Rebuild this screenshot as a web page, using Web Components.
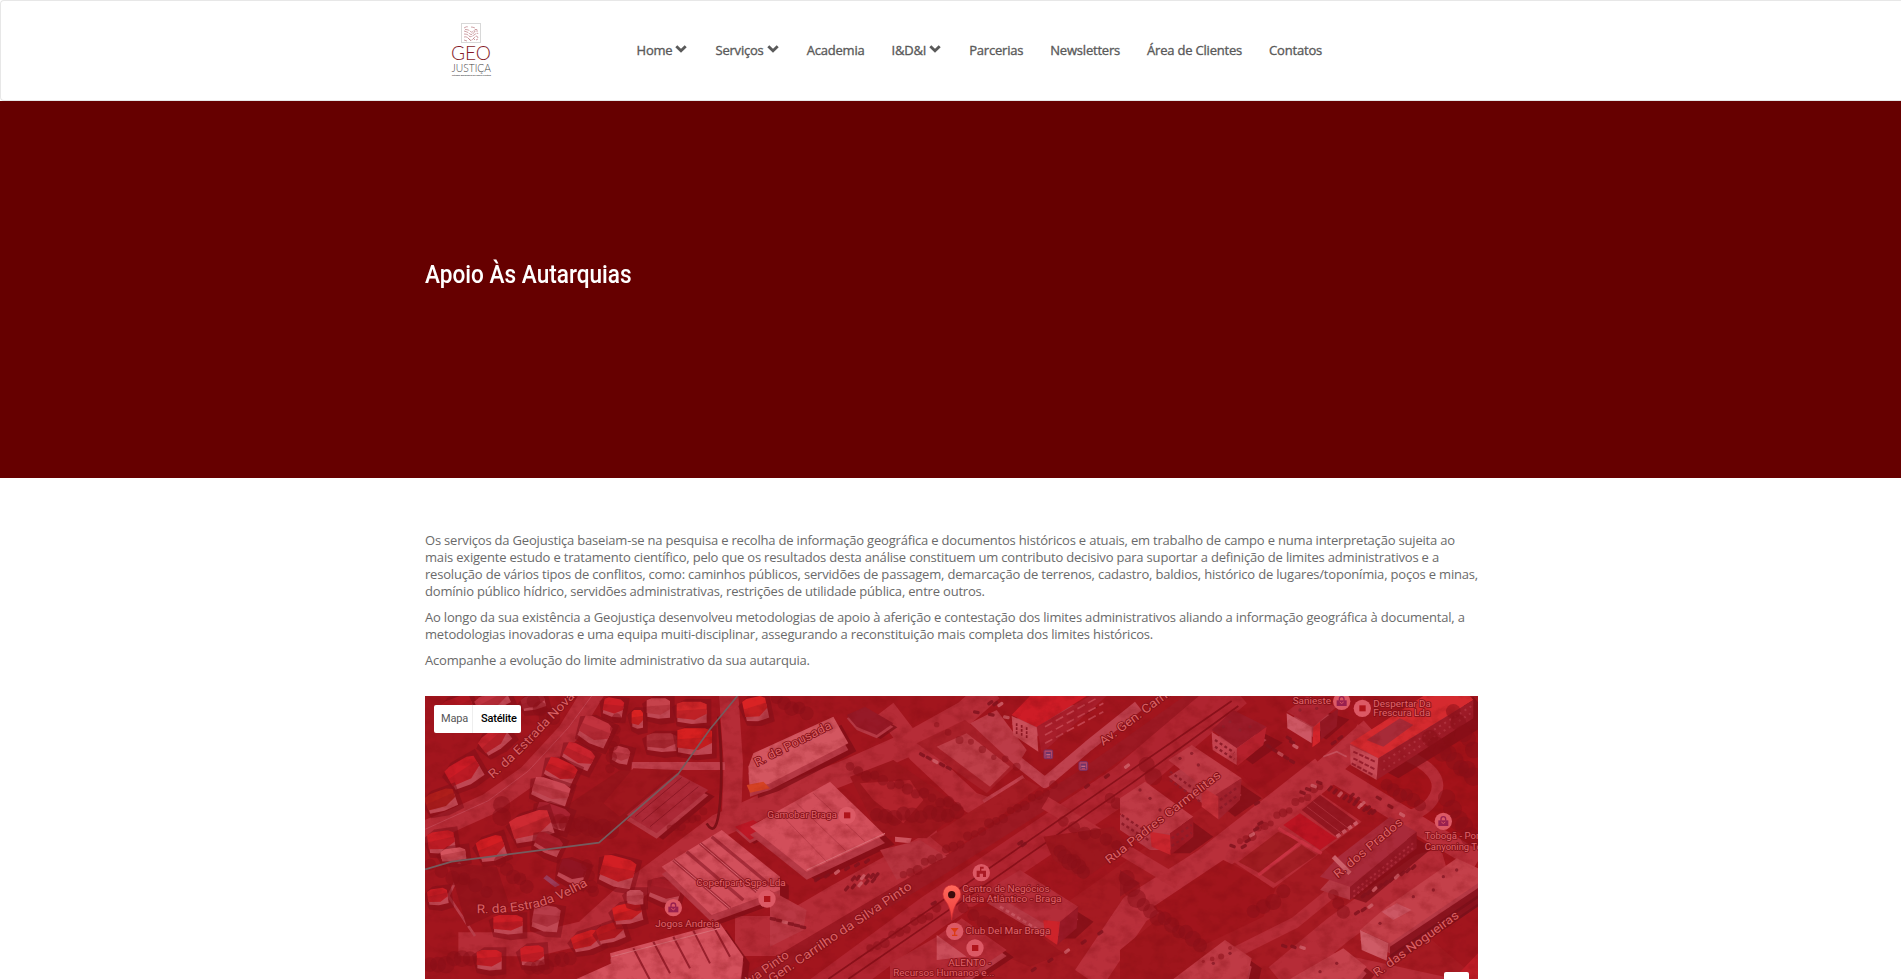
<!DOCTYPE html>
<html lang="pt">
<head>
<meta charset="utf-8">
<title>Geojustiça - Apoio Às Autarquias</title>
<style>
html,body{margin:0;height:100%;overflow:hidden;background:#fff;font-family:"Open Sans",sans-serif}
</style>
</head>
<body>
<geo-page>
  <geo-header slot="header">
    <geo-logo slot="logo"></geo-logo>
    <geo-nav-item menu>Home</geo-nav-item>
    <geo-nav-item menu>Serviços</geo-nav-item>
    <geo-nav-item>Academia</geo-nav-item>
    <geo-nav-item menu>I&amp;D&amp;I</geo-nav-item>
    <geo-nav-item>Parcerias</geo-nav-item>
    <geo-nav-item>Newsletters</geo-nav-item>
    <geo-nav-item>Área de Clientes</geo-nav-item>
    <geo-nav-item>Contatos</geo-nav-item>
  </geo-header>
  <geo-banner slot="banner">Apoio Às Autarquias</geo-banner>
  <geo-text>Os serviços da Geojustiça baseiam-se na pesquisa e recolha de informação geográfica e documentos históricos e atuais, em trabalho de campo e numa interpretação sujeita ao<br>mais exigente estudo e tratamento científico, pelo que os resultados desta análise constituem um contributo decisivo para suportar a definição de limites administrativos e a<br>resolução de vários tipos de conflitos, como: caminhos públicos, servidões de passagem, demarcação de terrenos, cadastro, baldios, histórico de lugares/toponímia, poços e minas,<br>domínio público hídrico, servidões administrativas, restrições de utilidade pública, entre outros.</geo-text>
  <geo-text>Ao longo da sua existência a Geojustiça desenvolveu metodologias de apoio à aferição e contestação dos limites administrativos aliando a informação geográfica à documental, a<br>metodologias inovadoras e uma equipa muiti-disciplinar, assegurando a reconstituição mais completa dos limites históricos.</geo-text>
  <geo-text>Acompanhe a evolução do limite administrativo da sua autarquia.</geo-text>
  <geo-map></geo-map>
</geo-page>
<script>
class Base extends HTMLElement{
  constructor(){super();this.attachShadow({mode:'open'}).innerHTML=this.view()}
}
customElements.define('geo-page',class extends Base{view(){return `
<style>:host{display:flex;flex-direction:column;height:979px;overflow:hidden}
main{width:1054px;margin:0 0 0 425px;padding-top:54px;display:flex;flex-direction:column;flex:1;min-height:0}</style>
<slot name="header"></slot><slot name="banner"></slot><main><slot></slot></main>`}});

customElements.define('geo-header',class extends Base{view(){return `
<style>:host{display:flex;box-sizing:border-box;height:101px;border:1px solid #e7e7e7;border-right:0;border-radius:4px 0 0 4px;background:#fff;padding-left:450px}
.logo{width:185.5px;padding-top:22px}
nav{display:flex;align-items:flex-start;padding-top:40px;gap:27px}</style>
<div class="logo"><slot name="logo"></slot></div><nav><slot></slot></nav>`}});

customElements.define('geo-nav-item',class extends Base{
view(){return `
<style>:host{display:flex;font:13px/18px "Open Sans",sans-serif;letter-spacing:-.2px;color:#5a5a5a;white-space:nowrap;-webkit-text-stroke:.35px #5a5a5a}
svg{display:none;width:12px;height:8px;margin:4px 1px 0 3px}:host([menu]) svg{display:block}</style>
<span><slot></slot></span><svg viewBox="0 0 12 8"><path d="M1.3 1.3 6 5.8l4.7-4.5" fill="none" stroke="#5a5a5a" stroke-width="2.9"/></svg>`}});

customElements.define('geo-logo',class extends Base{view(){return `
<style>:host{display:block}svg{display:block;overflow:visible}text{font-family:Lato,sans-serif;font-weight:300}</style>
<svg width="42" height="56" viewBox="0 0 42 56">
<rect x="10.5" y=".5" width="19" height="19" fill="#fff" stroke="#d8d8d8"/>
<g fill="none" stroke="#bd8188" stroke-width=".75">
<path d="M13 5q3-2 4-1M20 4q2 0 4 1M13 8q4 1 6 3t5-3h3M14 6.5q4 0 5.5 2T24 6.5h3M13 11q4 0 5 2t5-1 4-1M13 14q3-1 5 2t5-1 4 0M13 17l3 1M17 15l3 3M22 15l2 2M25 17l2-1" stroke-dasharray="4 .8"/></g>
<text x="0" y="37.3" textLength="40" lengthAdjust="spacingAndGlyphs" font-size="19.2" fill="#861b28">GEO</text>
<text x=".5" y="49.2" textLength="39.5" lengthAdjust="spacingAndGlyphs" font-size="12" fill="#444">JUSTIÇA</text>
<text x="1" y="52.8" textLength="39" lengthAdjust="spacingAndGlyphs" style="font-weight:700" font-size="2.4" fill="#444">estudos geográficos de apoio à justiça</text></svg>`}});

customElements.define('geo-banner',class extends Base{view(){return `
<style>:host{display:flex;align-items:center;box-sizing:border-box;height:377px;background:#600;padding:0 0 31px 425px}
h1{margin:0;font:500 26.5px/32px Roboto,sans-serif;color:#fff;white-space:nowrap;transform:scaleX(.853);transform-origin:0 50%}</style>
<h1><slot></slot></h1>`}});

customElements.define('geo-text',class extends Base{view(){return `
<style>:host{display:block;font:13px/17px "Open Sans",sans-serif;letter-spacing:-.19px;color:#6a6a6a;margin-bottom:9px;white-space:nowrap}</style><slot></slot>`}});

/* Building with a lit roof polygon, a shaded front wall and a cast shadow. */
const roof=(pts,fill='#c84a58',h=14)=>{
  const p=pts.split(' ').map(s=>s.split(',').map(Number));
  const sh=(dx,dy)=>p.map(a=>(a[0]+dx)+','+(a[1]+dy)).join(' ');
  return `<polygon points="${sh(h*1.2,h*1.2)}" fill="#68040c" opacity=".75"/><polygon points="${sh(0,h)}" fill="#b03d49"/><polygon points="${pts}" fill="${fill}"/>`};
const house=(x,y,w,h,r,fill='#cf1a20')=>`<g transform="translate(${x} ${y}) rotate(${r})"><path d="M-14 16 ${w*.3} -8H${w+14}V${h+18}L${w*.6} ${h+24} 0 ${h+14}z" fill="#6d060e" opacity=".55"/><path d="M2 ${h*.4}H${w}V${h*1.06}L${w*.5} ${h*1.12} 2 ${h}z" fill="#bd505b"/><path d="M0 6 ${w*.2} 0H${w*.8}L${w} 8V${h*.6}L${w*.6} ${h*.9} 0 ${h*.8}z" fill="${fill}"/><path d="M0 ${h*.45}L${w} ${h*.35}V${h*.6}L${w*.6} ${h*.9} 0 ${h*.8}z" fill="#7d0d16" opacity=".28"/></g>`;
const trees=(x1,y1,x2,y2,n,r=13)=>Array.from({length:n},(_,i)=>{const t=i/Math.max(1,n-1);return `<circle cx="${x1+(x2-x1)*t}" cy="${y1+(y2-y1)*t+(i%3-1)*6}" r="${r+(i*7%5)-2}" fill="#75060e" opacity=".5"/>`}).join('');
const cars=(x1,y1,x2,y2,n,r)=>Array.from({length:n},(_,i)=>{const t=i/Math.max(1,n-1);return `<rect transform="translate(${x1+(x2-x1)*t} ${y1+(y2-y1)*t}) rotate(${r})" width="20" height="10" rx="4" fill="${i%4==2?'#d07078':'#6b0a15'}" opacity=".85"/>`}).join('');
const disc=(x,y,g)=>`<circle cx="${x}" cy="${y}" r="26" fill="#dc5965"/><g transform="translate(${x} ${y})">${g}</g>`;
const square='<rect x="-9" y="-9" width="19" height="18" fill="#b0141b"/>';
const bag='<path d="M-15-3H15V14H-15z" fill="#99204f"/><path d="M-7-2v-5a7 7 0 0 1 14 0v5" fill="none" stroke="#99204f" stroke-width="4"/><path d="M-6 2q6 9 12 0" fill="none" stroke="#dc5965" stroke-width="3"/>';
const bus=(x,y)=>`<g transform="translate(${x} ${y})"><rect x="-13" y="-13" width="26" height="26" rx="4" fill="#b34665" stroke="#793064" stroke-width="3"/><path d="M-8-7H8V6H-8z" fill="#713469"/><path d="M-6-1H6V3H-6z" fill="#c6677c"/><path d="M-7 6v4M7 6v4" stroke="#713469" stroke-width="4"/></g>`;
const label=(x,y,t,len,s=27,r=0,a='')=>`<text transform="translate(${x} ${y}) rotate(${r})" font-size="${s}" textLength="${len}" lengthAdjust="spacingAndGlyphs" ${a}>${t}</text>`;

customElements.define('geo-map',class extends Base{view(){return `
<style>
:host{display:block;position:relative;width:1053px;height:283px;flex:none;margin-top:18px;background:#970f19;overflow:hidden}
svg.sat{display:block;width:1053px;height:283px}
.lbl text{font-family:Roboto,sans-serif;fill:#e0666c;stroke:#840f17;stroke-width:5;paint-order:stroke;stroke-linejoin:round}
.lbl .st text{fill:#db6165;stroke-width:5}
.types{position:absolute;left:9px;top:9px;display:flex;height:28px;background:#fff;border-radius:2px;font:11px/28px Roboto,sans-serif;letter-spacing:-.2px;width:87px}
.types span{box-sizing:border-box;width:39px;padding-left:7px;color:#565656;border-right:1px solid #eee}
.types b{width:48px;padding-left:8px;box-sizing:border-box;font-weight:500;color:#000}
.ctl{position:absolute;right:9px;bottom:0;width:25px;height:7px;background:#fff;border-radius:2px 2px 0 0}
</style>
<svg class="sat" viewBox="0 0 3159 849" preserveAspectRatio="none">
<defs>
<filter id="grain" x="0" y="0" width="100%" height="100%" color-interpolation-filters="sRGB"><feTurbulence type="fractalNoise" baseFrequency=".022 .028" numOctaves="5" seed="8"/><feColorMatrix values="0 0 0 0 .42  0 0 0 0 0  0 0 0 0 .02  2.4 0 0 0 -1.05"/></filter>
<filter id="soft" x="-5%" y="-5%" width="110%" height="110%" color-interpolation-filters="sRGB"><feGaussianBlur stdDeviation="2"/></filter>
<linearGradient id="pin" x2="0" y2="1"><stop stop-color="#ff6a5c"/><stop offset="1" stop-color="#ee3a3a"/></linearGradient>
</defs>
<rect width="3159" height="849" fill="#960e15"/>
<g filter="url(#soft)">
<path d="M1600 849 2450 250 3159 849z" fill="#9c151b"/><path d="M2800 100H3159V520L2850 330z" fill="#980a0f"/>
<!-- streets -->
<g fill="none" stroke="#b02c36" stroke-linejoin="round">
<path d="M-10 412 90 370 190 325 310 240 430 110 510-20" stroke-width="66"/>
<path d="M100 745 330 745 480 710 600 600 760 480 880 390 1080 300 1270 225 1450 145 1620 50 1700-20" stroke-width="72"/>
<path d="M910-20 925 200 920 350" stroke-width="58"/><path d="M620 210H900" stroke-width="24" stroke="#bb4450"/>
<path d="M930 720H1080L1250 620 1560 450" stroke-width="120"/>
<path d="M1380 40 1480 170 1640 320 1700 340" stroke-width="64"/>
<path d="M880 910 1540 520 1980 240 2360-30" stroke-width="46" stroke="#8e131c"/>
<path d="M1180 900 1520 650 2100 260 2430-20" stroke-width="110" stroke="#a9222d"/>
<path d="M1990 849 2130 640 2350 500 2700 225" stroke-width="96" stroke="#b4303b"/>
<path d="M2080 690 2700 225 2840 100" stroke-width="72" stroke="#b4303b"/>
<path d="M2690 210 3000 400 3159 495" stroke-width="58" stroke="#b4303b"/>
<path d="M2430 770 2610 680 2720 590" stroke-width="34"/>
<path d="M2560 849 2740 700 2990 520 3060 500" stroke-width="92"/>
<path d="M2700 800 3159 900" stroke-width="70"/>
<path d="M2790 100 2970 190Q3060 240 3030 300T2900 370" stroke-width="34"/>
<path d="M1860 320 2260 560" stroke-width="40"/><path d="M100 500 230 640M110 520 70 600 150 720" stroke="#b34450" stroke-width="8"/>
<path d="M1770 190 1860 260 1990 150 2140 30" stroke="#bd4855" stroke-width="32"/>
<path d="M1680 325 1800 250" stroke="#bf4754" stroke-width="30"/>
</g>
<path d="M1210 849 1540 622 2100 235 2420 15M1270 849 1560 650 2120 262 2440 30" fill="none" stroke="#760811" stroke-width="5"/>
<path d="M0 400 190 314 310 225 430 95 500 0" fill="none" stroke="#c04a58" stroke-width="3"/>

<!-- west block -->
<g transform="translate(-15 -18)">
<path d="M420 360 600 240 780 250 620 390 540 460 380 470z" fill="#860c12"/><path d="M85 520 230 530 270 650 140 710z" fill="#850b12"/><path d="M640 235 770 240 600 380 550 340z" fill="#930f15"/>
${house(60,40,90,60,-20,'#a8111a')}${house(160,30,100,50,-25,'#bb3541')}${house(300,25,70,40,-15,'#98202b')}
${house(170,155,90,55,-38,'#c02028')}${house(70,240,100,70,-30,'#cf1720')}${house(10,320,90,55,-20,'#a81a12')}
${house(500,70,90,70,25,'#c03540')}${house(450,150,90,55,28,'#c92029')}${house(395,195,90,60,25)}${house(350,255,110,60,18,'#cb4f5b')}${house(555,20,60,50,10)}
${house(360,330,100,60,20,'#a02030')}${house(265,390,120,75,-18,'#d02a30')}${house(360,420,80,50,25,'#9c1a27')}
${house(585,165,50,45,15,'#c04450')}${house(635,60,34,50,0,'#e01f1a')}${house(680,25,70,55,0,'#c64a52')}${house(770,35,90,60,0,'#d52524')}${house(680,130,90,50,0,'#a63038')}${house(772,115,104,72,0,'#dc1c18')}
${house(965,30,70,65,-12,'#df201e')}${house(20,430,80,60,-8)}${house(165,455,80,65,-18,'#d7191b')}${house(60,480,75,35,-8,'#d8616a')}${house(20,600,60,45,-8)}
${house(430,500,80,60,20,'#7f0d1b')}${house(555,490,100,80,15,'#d61b1e')}${house(700,560,90,60,15,'#9c1924')}${house(220,675,88,52,0)}${house(345,640,80,70,10,'#b2414e')}${house(170,780,75,55,0)}${house(300,770,70,55,-4)}${house(450,740,85,50,-18,'#d51b1c')}${house(525,715,80,50,-18,'#b41317')}${house(575,650,85,55,-12,'#dc1c1b')}${house(620,600,50,40,0,'#c35863')}
${roof('620,375 770,250 865,300 710,430','#a32836',16)}
<path d="M645 380 785 262M665 395 810 275M690 410 835 290" stroke="#7d1220" stroke-width="3"/>
${roof('725,530 905,420 1080,560 1080,600 875,675','#d55a66',22)}
<path d="M760 510 930 655M800 485 970 630M840 460 1010 605M875 440 1050 585" stroke="#9c2d3a" stroke-width="10"/><path d="M760 510 930 655M840 460 1010 605" stroke="#df7680" stroke-width="3"/>
${roof('440,880 575,820 570,790 900,700 970,800 960,880','#d85c68',16)}
<path d="M640 775 690 870M700 755 750 850M760 740 810 835M820 722 870 820M880 708 930 800" stroke="#8b1d2a" stroke-width="6"/><path d="M575 800 900 715" stroke="#e0848c" stroke-width="3"/>
${roof('985,230 1000,190 1240,80 1285,160 1050,280 990,300','#d6636c',20)}
<path d="M980 285 1030 275 1050 295 990 308z" fill="#d9481c"/>
${roof('945,410 1000,390 1050,420 990,450','#bb1220',10)}
<path d="M380 555 420 585 405 592 370 565z" fill="#8d4266"/>
<path d="M895 80Q910 230 900 340T860 400" fill="none" stroke="#64080d" stroke-width="8"/>
${trees(245,350,245,380,2,28)}${trees(420,400,570,420,8,25)}${trees(30,530,200,600,6,20)}${trees(240,520,320,590,5,20)}${trees(30,830,150,800,6,24)}${trees(340,40,400,90,4,22)}${trees(590,90,570,230,6,16)}${trees(330,840,450,800,6,22)}${trees(750,420,850,370,7,12)}${trees(500,530,520,610,4,18)}
</g>

<!-- central block -->
<g transform="translate(1035 -18)">
<path d="M240 260 370 210 580 355 470 445 330 440z" fill="#8f0f15"/><path d="M270 280 420 270 460 330 400 400 310 330z" fill="#ab2028"/>
<path d="M440 160 585 90 745 220 650 310z" fill="#9e1c24"/><path d="M500 170 590 130 720 230 660 290z" fill="#bb444d"/>
<path d="M480 440 760 265 810 290 540 490z" fill="#9b171d"/><path d="M600 100 680 60 770 180 740 230z" fill="#b9404b"/>
${roof('230,75 285,50 370,100 320,135 260,110','#871321',10)}
${roof('-60,410 180,275 345,435 110,545','#d55965',24)}
<path d="M30 370 175 520M80 340 230 485M130 310 285 455" stroke="#b8434f" stroke-width="3"/><path d="M110 540 345 430" stroke="#e1858c" stroke-width="3"/>
<path d="M375 440 425 445 420 460 375 455z" fill="#cf606a"/>
<path d="M0 600 110 660 100 720 0 770z" fill="#b63c47"/><path d="M330 480 450 450 530 500 380 570z" fill="#b13641"/>
${roof('725,75 780,18 950,18 800,112','#d01720',28)}<path d="M800 110 960 18H1010L815 190z" fill="#9e1926"/><path d="M825 110 985 22M825 135 1000 40M825 160 1000 65" stroke="#c04a55" stroke-width="5" stroke-dasharray="25 12"/>
<path d="M725 78 800 112 805 185 730 135z" fill="#cb5963"/><path d="M740 100v35M755 105v35M770 112v35" stroke="#7c111c" stroke-width="5" stroke-dasharray="8 4"/>
<path d="M820 440 1030 410 1080 470 940 570 850 510z" fill="#8f1016"/><path d="M590 650 690 650 880 790 780 830 660 780z" fill="#8f1016"/>
${roof('650,600 750,540 925,650 870,700 820,700','#ae2d39',38)}<path d="M820 690 870 695 862 765 825 740z" fill="#cf2026"/><path d="M690 650 830 735" stroke="#c55f6a" stroke-width="8" stroke-dasharray="12 8"/><path d="M870 695 925 650 920 715 862 765z" fill="#8a1422"/>
${roof('500,740 575,685 710,780 560,880 360,880 360,820','#ac2934',18)}<path d="M500 735 590 800 500 810z" fill="#cb5865"/>
${trees(400,560,850,290,22,13)}${trees(240,235,560,350,14,15)}${trees(320,380,560,370,10,22)}${trees(500,110,740,230,8,10)}${trees(870,490,940,540,6,22)}${trees(300,780,500,660,10,13)}${trees(880,400,1040,460,6,18)}${trees(580,660,700,720,5,18)}${trees(1020,330,1040,340,2,18)}${trees(20,30,110,70,5,20)}
${cars(450,185,530,225,5,30)}${cars(240,570,310,560,6,-50)}${cars(130,570,280,515,6,-35)}${cars(220,600,300,575,5,-50)}${cars(740,460,750,465,2,-35)}${cars(480,640,485,645,1,-30)}${cars(610,60,700,75,3,10)}${cars(650,40,680,45,3,-35)}${cars(940,290,1060,230,3,-35)}${cars(780,840,980,730,5,-35)}${cars(0,680,90,705,6,10)}
</g>

<!-- east block -->
<g transform="translate(2085 -18)">
<path d="M350 240 440 170 520 225 410 300z" fill="#920b14"/><path d="M100 650 310 510 470 590 430 680 220 780z" fill="#950d13"/><path d="M0 780 110 690 260 790 170 867H0z" fill="#920e13"/><path d="M0 540 60 580 0 620z" fill="#861018"/>
${roof('275,120 340,60 440,110 350,175','#8d1624',40)}<path d="M350 175 440 110 430 165 352 228z" fill="#b01e29"/><path d="M275 125 350 175V225L278 180z" fill="#c54c58"/>
${roof('145,210 215,165 365,265 285,320','#bd3e49',50)}<path d="M285 315 365 265 360 330 295 390z" fill="#98202c"/><path d="M245 290 295 320V388L245 350z" fill="#c4323a"/>
${roof('0,325 75,275 220,380 150,430 90,430 0,370','#bd3e49',50)}<path d="M150 430 220 380V440L152 495z" fill="#92131d"/><path d="M90 425 150 435 152 495 95 470z" fill="#c9232a"/>
<g stroke="#7e1724" stroke-width="7" stroke-dasharray="9 8"><path d="M150 245 240 310M150 270 240 335M300 330 355 290M300 355 355 315M5 375 85 430M5 400 85 450M155 445 215 405M155 468 215 428M285 150l58 38M285 170l58 38"/></g>
${roof('500,65 560,20 650,50 580,110','#a62330',32)}<path d="M500 70 575 112V160L502 115z" fill="#cf6571"/><path d="M580 112 600 95 600 155 577 172z" fill="#d82327"/><path d="M600 95 655 55 650 110 602 150z" fill="#83121d"/>
${roof('690,160 1000,-40 1060,30 775,205','#d92a2c',50)}<path d="M690 165 775 205 770 270 692 225z" fill="#ca5560"/><path d="M740 150 840 85 880 105 790 170z" fill="#9d2b38"/><path d="M775 205 1060 30 1060 85 770 270z" fill="#901622"/><path d="M700 185 765 215M700 205 765 238M695 220 760 255" stroke="#8b1b2b" stroke-width="6" stroke-dasharray="14 5"/><path d="M790 215 1060 45M790 240 1060 65" stroke="#a8333f" stroke-width="6" stroke-dasharray="6 12"/>
<path d="M340 515 600 310 725 395 460 595z" fill="#b12c36"/>
<path d="M355 515 475 425 545 455 420 550z" fill="#94181a"/><path d="M425 555 545 465 590 495 465 580z" fill="#981a1e"/><path d="M490 405 540 370 650 445 600 480z" fill="#b80c1b"/><path d="M545 360 600 315 710 395 650 440z" fill="#84101a"/>
<path d="M415 555 545 455 605 490M475 415 600 490" fill="none" stroke="#ca3445" stroke-width="9"/><path d="M560 350 665 430M580 335 685 415" stroke="#b0404a" stroke-width="2"/>
<path d="M650 440 715 395" stroke="#ce6873" stroke-width="11" stroke-dasharray="13 8"/>
${roof('600,560 655,500 810,380 890,425 690,590','#a02a3a',40)}<path d="M690 590 890 425V475L690 630z" fill="#82121f"/><path d="M700 605 885 455M700 620 885 470" stroke="#a02a38" stroke-width="6" stroke-dasharray="7 9"/><path d="M640 500 690 550" stroke="#cf727b" stroke-width="14"/>
${roof('720,720 800,650 1010,505 1074,535 1074,580 810,760','#c3464f',30)}<path d="M720 720 805 760 800 812 725 780z" fill="#d06a74"/><path d="M810 770 1080 590V640L810 820z" fill="#780d18"/><path d="M785 665 830 640 875 660 820 690z" fill="#ce6471"/>
${roof('160,867 315,750 395,805 380,870','#bd3f49',25)}${roof('510,867 670,775 740,830 700,880','#c44852',20)}
<path d="M1000 867 1074 790V867z" fill="#b91720"/><path d="M610 200 650 185 680 200" stroke="#c45b67" stroke-width="5" fill="none"/>
<path d="M810 800 1074 620M810 825 1074 645" stroke="#650812" stroke-width="8"/>
${trees(360,460,600,290,14,11)}${trees(70,650,240,760,9,22)}${trees(400,670,490,610,4,22)}${trees(20,570,50,620,3,26)}${trees(800,290,900,340,6,20)}${trees(80,230,100,260,2,26)}${trees(930,150,1060,260,8,26)}${trees(980,330,1050,440,5,28)}${trees(1000,70,1060,180,5,24)}${trees(640,620,670,660,3,18)}${trees(250,820,330,780,4,7)}
${cars(440,160,510,205,5,30)}${cars(620,300,740,370,9,-50)}${cars(685,320,750,370,5,-45)}${cars(500,135,520,160,3,30)}${cars(540,300,590,270,4,20)}${cars(770,315,840,365,3,30)}${cars(720,620,870,535,10,-45)}${cars(410,400,360,470,5,-30)}${cars(330,460,335,462,1,20)}${cars(400,340,405,342,1,-30)}${cars(700,670,740,650,3,-35)}${cars(630,160,650,145,2,-35)}${cars(485,760,540,765,3,20)}
<g fill="#821c29">${[[310,110],[330,95],[360,120],[390,110],[215,190],[180,205],[235,225],[290,250],[60,300],[90,325],[120,360],[540,60],[590,55],[880,620],[940,600],[780,700],[970,560],[1010,540],[330,790],[280,820],[650,820],[600,845]].map(a=>`<circle cx="${a[0]}" cy="${a[1]}" r="5"/>`).join('')}</g>
</g>
</g>
<rect width="3159" height="849" filter="url(#grain)" opacity=".32"/>
<rect width="3159" height="849" fill="#c8303a" opacity=".24"/>

<path d="M0 520 80 497 522 440 760 233 855 100 937 0" fill="none" stroke="#755c5f" stroke-width="5"/>

<g class="lbl" transform="translate(-15 -18)"><g class="st">
<defs><path id="nova" d="M218 267 Q300 195 340 152 T490-5"/><path id="velha" d="M170 670 Q310 670 390 640 T525 572"/></defs>
<text font-size="37"><textPath href="#nova" textLength="350" lengthAdjust="spacingAndGlyphs">R. da Estrada Nova</textPath></text>
<text font-size="37"><textPath href="#velha" textLength="350" lengthAdjust="spacingAndGlyphs">R. da Estrada Velha</textPath></text>
${label(1010,230,'R. de Pousada',255,36,-27)}</g>
${label(829,588,'Copefipart Sgps Lda',268)}${label(706,710,'Jogos Andreia',192)}
${disc(1041,627,square)}${disc(760,653,bag)}
</g>
<g class="lbl" transform="translate(1035 -18)"><g class="st">
${label(5,880,'Gen. Carrilho da Silva Pinto',510,37,-34)}${label(-90,905,'Silva Pinto',183,36,-35)}${label(1000,168,'Av. Gen. Carrilho',300,37,-37)}${label(1017,523,'Rua Padres Carmelitas',428,35,-38)}</g>
${label(-8,384,'Gamobar Braga',209)}${label(577,605,'Centro de Negócios',262)}${label(577,635,'Ideia Atlântico - Braga',298)}${label(586,731,'Club Del Mar Braga',255)}${label(535,829,'ALENTO -',128)}${label(370,859,'Recursos Humanos e...',303)}
${disc(231,376,square)}${disc(634,548,'<path d="M-14 13V-6H-4V-18H7V-12H0V-6H14V13H5V3H-5V13z" fill="#a91923"/>')}${disc(554,724,'<path d="M-12-10H12L2 2V10H8V14H-8V10H-2V2z" fill="#dc3b14"/>')}${disc(615,774,square)}
${bus(835,193)}${bus(940,228)}
<path d="M545 690Q541 650 526 632A27 28 0 1 1 565 632Q550 650 545 690z" fill="url(#pin)" stroke="#c82b30" stroke-width="2"/><circle cx="545" cy="614" r="11" fill="#3c0b0b"/>
</g>
<g class="lbl" transform="translate(2085 -18)"><g class="st">
${label(653,566,'R. dos Prados',258,36,-40)}${label(770,862,'R. das Nogueiras',308,36,-36)}</g>
${label(518,41,'Sanieste',115)}${label(760,50,'Despertar Da',173)}${label(760,79,'Frescura Lda',171)}${label(914,448,'Tobogã - Porto',190)}${label(914,479,'Canyoning Tours',212)}
${disc(665,34,bag)}${disc(727,55,square)}${disc(970,394,bag)}
</g>
</svg>
<div class="types"><span>Mapa</span><b>Satélite</b></div><div class="ctl"></div>`}});
</script>
</body>
</html>
